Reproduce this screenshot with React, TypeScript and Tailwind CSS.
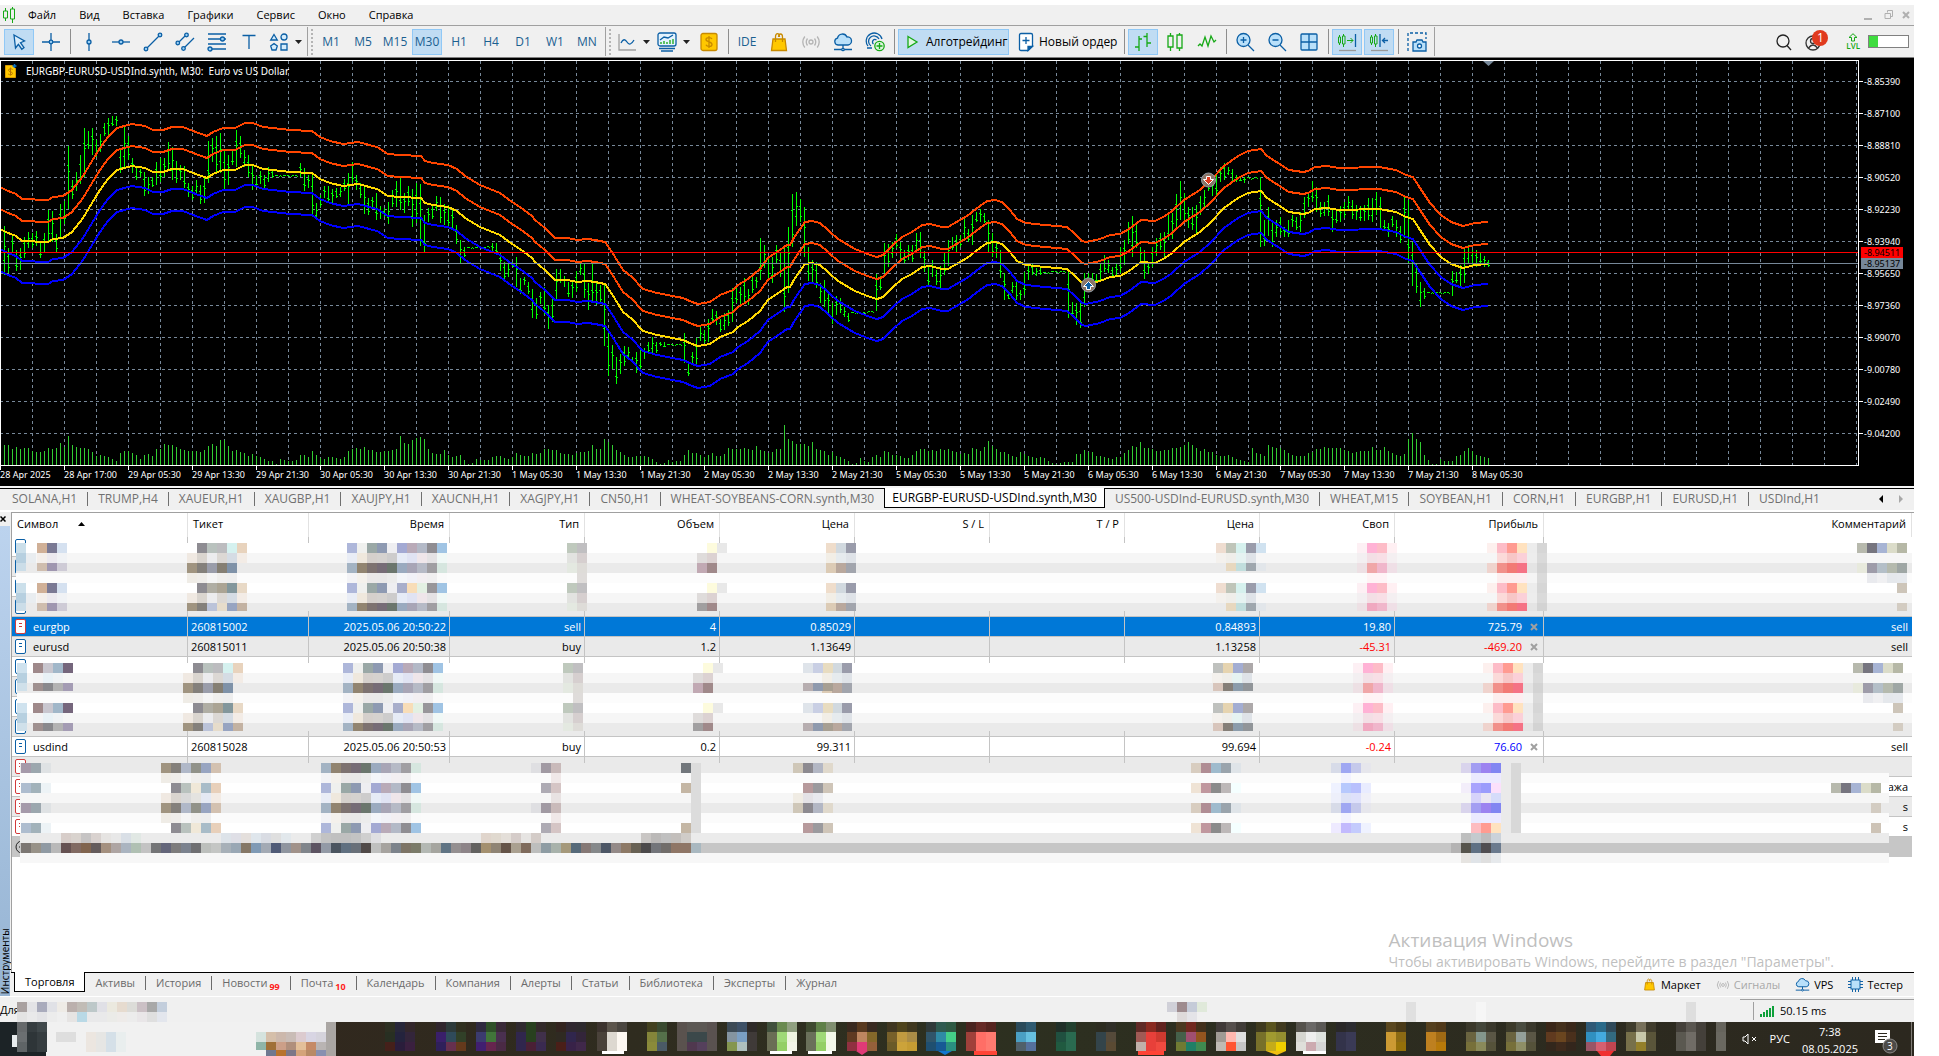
import type { ReactNode } from 'react';

const BLUE = '#0b5fa5';
const GREEN = '#16a916';

// high/low pairs per bar, top of the plot area is y = 60
const BARS = `226 275,248 273,236 253,250 271,248 270,237 258,232 248,233 248,231 246,243 258,233 252,210 241,211 242,234 253,204 237,201 224,146 209,180 199,172 191,155 184,128 177,131 149,128 155,140 157,134 152,123 136,118 135,116 126,116 126,150 173,127 168,136 160,158 173,166 180,169 177,172 196,177 194,177 187,162 185,158 182,158 177,142 170,147 180,161 183,165 180,166 188,183 197,186 200,180 194,185 204,178 203,141 183,138 162,136 173,133 173,150 189,155 185,150 165,130 167,136 158,150 167,155 177,165 190,176 187,171 184,175 188,167 182,170 178,175 176,175 176,175 176,175 176,175 176,175 176,163 177,168 191,175 188,173 215,203 220,195 207,186 198,186 203,189 203,188 198,187 197,179 191,173 205,162 183,175 190,183 198,185 214,198 215,197 207,193 220,206 219,208 217,202 224,190 207,181 207,177 210,193 213,186 206,189 227,183 223,184 246,215 252,208 222,205 219,196 211,197 223,204 225,205 227,209 228,225 244,240 263,247 257,247 248,247 248,247 248,246 247,247 248,246 247,243 252,243 253,253 271,262 280,263 277,262 267,257 287,278 294,277 285,282 294,289 318,298 319,292 304,287 315,305 329,298 322,269 299,269 283,276 287,282 297,280 298,271 292,263 275,263 298,283 310,262 302,283 305,285 303,285 346,333 376,345 369,357 384,354 374,346 366,347 359,357 363,352 373,347 372,348 359,342 353,337 353,342 353,342 346,342 347,344 345,344 345,344 345,344 345,333 363,362 376,352 364,338 364,327 341,330 343,319 342,309 322,311 325,319 332,313 330,310 326,288 322,285 303,287 305,278 302,289 305,275 293,277 288,238 280,245 268,257 278,257 283,245 263,253 277,247 312,227 293,194 247,192 226,199 222,207 257,247 281,260 282,262 288,283 303,280 307,291 313,303 324,296 315,298 313,307 317,313 322,312 313,312 313,313 314,312 313,311 312,311 312,274 311,276 290,243 273,244 267,242 258,234 248,242 260,250 263,245 260,245 262,233 250,232 258,251 272,267 285,260 277,270 285,266 288,253 275,240 266,237 250,235 252,235 247,218 240,229 242,215 245,212 222,209 222,213 223,220 253,233 257,242 258,250 278,273 300,293 299,282 293,280 300,290 300,272 295,265 280,263 275,268 276,268 275,272 273,272 273,271 272,271 272,271 272,271 272,270 318,302 317,303 325,303 328,273 307,273 285,273 288,274 282,263 282,255 272,260 273,267 277,263 277,247 273,240 265,222 244,216 257,223 248,247 263,250 279,262 274,247 267,238 256,233 250,232 258,215 240,213 239,194 227,181 220,193 220,207 228,207 230,205 235,196 215,190 208,177 191,177 196,173 195,167 182,163 180,167 175,169 183,175 182,176 181,177 183,177 178,178 179,177 178,177 247,220 246,207 236,223 247,220 237,217 235,227 237,220 237,215 227,217 230,212 232,197 218,192 207,181 202,187 212,202 217,202 216,195 216,210 232,210 223,206 222,202 218,196 210,200 219,205 220,206 221,205 221,198 220,198 222,192 215,197 228,220 229,223 237,216 227,220 237,226 243,195 238,200 263,242 286,263 293,282 307,288 299,292 293,292 293,292 293,292 293,292 293,292 293,271 296,272 283,265 287,247 283,245 263,250 267,250 267,253 264,256 267,260 267`
  .split(',')
  .map((b) => b.trim().split(' ').map(Number));

const VOLUMES = [
  20, 20, 16, 18, 16, 17, 17, 14, 13, 13, 14, 17, 16, 17, 22, 18, 29, 20, 18, 17, 17, 16, 13, 9, 10, 9, 8, 6, 4, 12, 14, 14, 12, 10, 6, 10, 11, 9,
  16, 16, 21, 20, 20, 18, 16, 15, 14, 14, 14, 13, 15, 19, 21, 19, 25, 25, 19, 14, 15, 13, 12, 9, 11, 9, 8, 6, 4, 4, 1, 6, 5, 4, 4, 5, 10, 10, 8,
  14, 10, 7, 6, 8, 8, 7, 6, 8, 14, 16, 17, 16, 18, 15, 15, 13, 13, 14, 14, 15, 16, 29, 22, 21, 25, 27, 28, 26, 16, 12, 11, 11, 15, 10, 8, 9, 10,
  5, 1, 2, 6, 5, 5, 5, 8, 9, 9, 7, 6, 8, 12, 10, 9, 9, 12, 11, 12, 16, 16, 15, 15, 12, 11, 11, 10, 12, 13, 13, 14, 20, 16, 16, 26, 23, 20, 15,
  13, 10, 8, 8, 9, 9, 9, 8, 6, 3, 1, 2, 5, 3, 4, 4, 10, 15, 12, 12, 10, 8, 10, 12, 9, 9, 11, 17, 16, 16, 16, 17, 16, 15, 19, 15, 14, 12, 13, 16, 16,
  40, 26, 24, 21, 21, 21, 19, 23, 16, 15, 14, 10, 13, 9, 8, 6, 4, 1, 2, 7, 4, 3, 8, 10, 8, 14, 13, 10, 10, 9, 7, 7, 10, 14, 16, 16, 14, 15,
  14, 16, 15, 16, 14, 13, 11, 12, 11, 17, 16, 14, 18, 24, 19, 16, 13, 13, 11, 9, 8, 13, 11, 9, 8, 7, 8, 7, 4, 2, 1, 2, 3, 3, 3, 11, 11, 15, 13,
  13, 9, 9, 8, 7, 6, 8, 8, 12, 15, 19, 18, 23, 17, 17, 16, 14, 14, 15, 15, 17, 17, 18, 20, 23, 20, 17, 14, 16, 13, 13, 10, 9, 9, 10, 8, 6, 5, 4,
  3, 17, 12, 11, 9, 20, 18, 17, 17, 15, 12, 10, 9, 9, 9, 12, 13, 16, 16, 18, 17, 17, 17, 17, 15, 14, 12, 13, 14, 14, 14, 18, 15, 15, 18, 14, 12,
  10, 9, 11, 26, 32, 26, 23, 10, 5, 1, 1, 6, 4, 4, 4, 9, 10, 14, 17, 14, 10, 9, 8, 7, 2,
];

const AVERAGE =
  '0,229 8,233 16,236 22,241 48,242 53,239 63,238 72,232 83,218 92,203 100,190 108,179 117,170 132,166 145,168 153,172 163,172 172,169 183,169 193,173 207,178 213,174 223,170 235,170 245,165 253,165 263,169 290,172 312,173 320,179 330,183 343,186 358,184 377,189 388,196 400,197 421,198 425,203 433,205 448,207 457,211 465,218 480,227 500,235 512,244 520,249 532,258 535,262 545,270 555,280 568,280 577,282 588,281 595,282 605,284 610,291 615,299 623,312 632,319 643,331 657,335 683,340 692,344 698,346 710,344 720,337 733,332 738,327 748,321 760,311 768,300 787,287 790,287 795,278 805,264 812,263 820,265 828,272 838,281 855,291 870,297 877,299 883,297 893,287 902,279 912,274 922,267 930,266 942,269 948,269 953,266 967,258 980,248 987,243 995,242 1002,244 1010,252 1017,261 1026,265 1045,267 1067,269 1074,275 1082,283 1086,284 1100,281 1110,277 1120,276 1129,271 1141,262 1155,263 1165,258 1172,253 1184,242 1200,232 1210,223 1224,208 1238,198 1248,193 1261,191 1267,198 1275,203 1289,212 1303,214 1308,213 1315,209 1327,208 1339,210 1379,209 1396,212 1406,217 1413,219 1420,230 1430,245 1441,257 1451,264 1463,268 1475,265 1488,264';

const ENVELOPES = [
  { offset: -42, color: '#ff4500' },
  { offset: -20, color: '#ff4500' },
  { offset: 20, color: '#0000ff' },
  { offset: 42, color: '#0000ff' },
  { offset: 0, color: '#ffd700' },
];

const PRICES = ['8.85390', '8.87100', '8.88810', '8.90520', '8.92230', '8.93940', '8.95650', '8.97360', '8.99070', '9.00780', '9.02490', '9.04200'];

const TIMES = [
  '28 Apr 2025', '28 Apr 17:00', '29 Apr 05:30', '29 Apr 13:30', '29 Apr 21:30', '30 Apr 05:30', '30 Apr 13:30', '30 Apr 21:30',
  '1 May 05:30', '1 May 13:30', '1 May 21:30', '2 May 05:30', '2 May 13:30', '2 May 21:30', '5 May 05:30', '5 May 13:30',
  '5 May 21:30', '6 May 05:30', '6 May 13:30', '6 May 21:30', '7 May 05:30', '7 May 13:30', '7 May 21:30', '8 May 05:30',
];

function PriceChart() {
  const barPath = BARS.map(([hi, lo], i) => {
    const x = 4 + i * 4;
    const span = lo - hi;
    const open = Math.round(hi + span * (i % 3 === 0 ? 0.7 : 0.3));
    const close = Math.round(hi + span * (i % 2 === 0 ? 0.4 : 0.75));
    return `M${x} ${hi}h1v${Math.max(span, 1)}h-1zM${x - 1} ${open}h1v1h-1zM${x + 1} ${close}h1v1h-1z`;
  }).join('');
  const volumePath = VOLUMES.slice(0, BARS.length).map((v, i) => `M${4 + i * 4} ${465 - v}h1v${v}h-1z`).join('');

  return (
    <svg width="1914" height="428" viewBox="0 58 1914 428" className="block bg-black font-['Noto_Sans',sans-serif] text-[9px]">
      <g stroke="#778899" strokeDasharray="3 3" shapeRendering="crispEdges">
        {PRICES.map((p, i) => (
          <line key={p} x1="0" x2="1858" y1={81.5 + i * 32} y2={81.5 + i * 32} />
        ))}
        {Array.from({ length: 58 }, (_, i) => (
          <line key={i} x1={32.5 + i * 32} x2={32.5 + i * 32} y1="61" y2="465" />
        ))}
      </g>
      <path d={volumePath} fill="#32cd32" shapeRendering="crispEdges" />
      <path d={barPath} fill="#00ff00" shapeRendering="crispEdges" />
      {ENVELOPES.map((e) => (
        <polyline
          key={e.offset}
          points={AVERAGE}
          transform={`translate(0 ${e.offset})`}
          fill="none"
          stroke={e.color}
          strokeWidth="2"
          strokeLinejoin="round"
          shapeRendering="crispEdges"
        />
      ))}
      <g shapeRendering="crispEdges">
        <path d="M0 263h1858v1H0z" fill="#778899" />
        <path d="M0 252h1858v1H0z" fill="#ff0000" />
        <path d="M0 60.500H1858.500V465.500H0.500V60" fill="none" stroke="#fff" />
        {PRICES.map((p, i) => (
          <path key={p} d={`M1859 ${81 + i * 32}h4v1h-4z`} fill="#fff" />
        ))}
        {TIMES.map((t, i) => (
          <path key={t} d={`M${i * 64} 466h1v4h-1z`} fill="#fff" />
        ))}
        <path d="M1861 247h42v11h-42z" fill="#ff0000" />
        <path d="M1861 258h42v11h-42z" fill="#778899" />
      </g>
      <path d="M1483 61h11l-5.500 5z" fill="#778899" />
      <g fill="#fff">
        {PRICES.map((p, i) => (
          <text key={p} x="1864" y={85 + i * 32}>{`-${p}`}</text>
        ))}
        {TIMES.map((t, i) => (
          <text key={t} x={i * 64} y="478">{t}</text>
        ))}
        <text x="26" y="75" className="text-[10px] whitespace-pre">{'EURGBP-EURUSD-USDInd.synth, M30:  Euro vs US Dollar'}</text>
      </g>
      <text x="1864" y="256">-8.94511</text>
      <text x="1864" y="267">-8.95137</text>
      <g>
        <path d="M5.500 65.500h7l3 3v9h-10z" fill="#ffc800" stroke="#d99a00" />
        <path d="M12.500 69.500c-1-1-4-1-4 .7 0 2 4 1.200 4 3.200 0 1.800-3 1.800-4.300.6M10.500 67.500v8" fill="none" stroke="#b87800" />
        <path d="M14.500 64v4M12.500 66h4" stroke="#0b73c5" strokeWidth="1.500" />
      </g>
      <g stroke="#8f9aa5" fill="#8a7568">
        <circle cx="1208.500" cy="180" r="7" />
        <circle cx="1088.500" cy="285" r="7" />
      </g>
      <path d="M1206.500 176.500h4v3h3l-5 5-5-5h3z" fill="#e0391e" stroke="#fff" />
      <path d="M1086.500 289.500h4v-3h3l-5-5-5 5h3z" fill="#0b5fa5" stroke="#fff" />
    </svg>
  );
}

function Icon({ children, size = 20, color = BLUE }: { children: ReactNode; size?: number; color?: string }) {
  return (
    <svg width={size} height={size} viewBox="0 0 20 20" fill="none" stroke={color} strokeWidth="1.3" className="shrink-0">
      {children}
    </svg>
  );
}

function Tool({ label, active, children }: { label: string; active?: boolean; children: ReactNode }) {
  return (
    <button
      aria-label={label}
      className={`flex h-[26px] w-[30px] shrink-0 items-center justify-center border text-[12px] text-[#1b6090] ${
        active ? 'border-[#90c8f6] bg-[#c0dcf3]' : 'border-transparent'
      }`}
    >
      {children}
    </button>
  );
}

function MenuTool({ label, children }: { label: string; children: ReactNode }) {
  return (
    <button aria-label={label} className="flex h-[26px] w-[38px] shrink-0 items-center gap-[6px] pl-[3px]">
      {children}
      <svg width="7" height="4" viewBox="0 0 7 4" fill="#222">
        <path d="M0 0h7L3.500 4z" />
      </svg>
    </button>
  );
}

function Divider() {
  return (
    <div className="flex w-1 shrink-0 justify-center">
      <div className="h-[25px] w-px bg-[#8d8d8d]" />
    </div>
  );
}

function Grip() {
  return (
    <div className="flex w-[8px] shrink-0 items-center gap-[3px] pl-px">
      <div className="h-[29px] w-px bg-[#a0a0a0]" />
      <div className="h-[26px] border-l-2 border-dotted border-[#b4b4b4]" />
    </div>
  );
}

function BagIcon({ size = 20 }: { size?: number }) {
  return (
    <Icon size={size} color="#c88a00">
      <path d="M4 7h12l1.500 11.500h-15z" fill="#ffc800" />
      <path d="M6.500 10V5c0-4.500 4-4.500 4 0M9.500 5c0-4 4-4 4 0v5" />
    </Icon>
  );
}

function SignalIcon({ size = 20 }: { size?: number }) {
  return (
    <Icon size={size} color="#b4b4b4">
      <circle cx="10" cy="10" r="2" />
      <path d="M6.500 6.500q-2.500 3.500 0 7M13.500 6.500q2.500 3.500 0 7M3.800 4.500q-4 5.500 0 11M16.200 4.500q4 5.500 0 11" />
    </Icon>
  );
}

function CloudIcon({ size = 20 }: { size?: number }) {
  return (
    <Icon size={size}>
      <path d="M5 13a3.500 3.500 0 0 1-.5-6.900A5 5 0 0 1 14 5a4 4 0 0 1 1 8z" fill="#b9e0fa" />
      <path d="M10 13v4M1 17.500h18" />
      <circle cx="10" cy="17.500" r="1.200" fill="#fff" />
    </Icon>
  );
}

const TIMEFRAMES = ['M1', 'M5', 'M15', 'M30', 'H1', 'H4', 'D1', 'W1', 'MN'];

function Toolbar() {
  return (
    <div className="flex h-[32px] items-center gap-[2px] border-b border-[#808080] bg-[#f0f0f0] pl-1">
      <Tool label="Курсор" active>
        <Icon>
          <path d="M5 3l10.500 6-4 1.700 3.500 4.800-2.200 1.700-3.400-4.900L6.500 16z" fill="#d9ecfa" />
        </Icon>
      </Tool>
      <Tool label="Перекрестие">
        <Icon>
          <path d="M10 1v7M10 12v7M1 10h7M12 10h7" />
          <circle cx="10" cy="10" r="1.800" fill="#9bd0f5" />
        </Icon>
      </Tool>
      <Divider />
      <Tool label="Вертикальная линия">
        <Icon>
          <path d="M10 1v18" />
          <circle cx="10" cy="10" r="2" fill="#9bd0f5" />
        </Icon>
      </Tool>
      <Tool label="Горизонтальная линия">
        <Icon>
          <path d="M1 10h18" />
          <circle cx="10" cy="10" r="2" fill="#9bd0f5" />
        </Icon>
      </Tool>
      <Tool label="Трендовая линия">
        <Icon>
          <path d="M3 17L17 3" />
          <circle cx="3" cy="17" r="1.800" fill="#9bd0f5" />
          <circle cx="17" cy="3" r="1.800" fill="#9bd0f5" />
        </Icon>
      </Tool>
      <Tool label="Канал">
        <Icon>
          <path d="M2.500 11.500l9-9M8 17l11-11" />
          <circle cx="2.800" cy="11" r="1.800" fill="#9bd0f5" />
          <circle cx="11.500" cy="3" r="1.800" fill="#9bd0f5" />
          <circle cx="8.500" cy="16.500" r="1.800" fill="#9bd0f5" />
        </Icon>
      </Tool>
      <Tool label="Уровни Фибоначчи">
        <Icon>
          <path d="M1 2h18M1 7h18M1 12h18M1 17h18" />
          <circle cx="15.500" cy="7" r="2" fill="#9bd0f5" />
          <circle cx="3" cy="17" r="2" fill="#9bd0f5" />
        </Icon>
      </Tool>
      <Tool label="Текст">
        <Icon>
          <path d="M3.500 3.500h13M10 3.500V17" />
        </Icon>
      </Tool>
      <MenuTool label="Фигуры">
        <Icon>
          <path d="M5 2.500l3.300 5.500H1.700z" fill="#d5ecfb" />
          <circle cx="15" cy="5" r="3" fill="#d5ecfb" />
          <path d="M5 11.500l3.300 2.500-1.300 4H3l-1.300-4zM12 12h6v6h-6z" fill="#d5ecfb" />
        </Icon>
      </MenuTool>
      <Grip />
      {TIMEFRAMES.map((t) => (
        <Tool key={t} label={t} active={t === 'M30'}>
          {t}
        </Tool>
      ))}
      <Grip />
      <MenuTool label="Линия">
        <Icon>
          <path d="M2 2v16h17" stroke="#a0a0a0" />
          <path d="M4 11q3-6 6-1t7-2" />
        </Icon>
      </MenuTool>
      <MenuTool label="Шаблоны">
        <Icon>
          <rect x="1" y="1" width="18" height="13" rx="2" fill="#e4f3fd" />
          <path d="M3 8l4-3 4 1 5-3M2 16.500h16M4 19h12" />
          <path d="M4 12v-2M7 12V9M10 12v-2M13 12V8M16 12V7" stroke={GREEN} />
        </Icon>
      </MenuTool>
      <Tool label="Символы">
        <Icon color="#c88a00">
          <rect x="2" y="1.500" width="16" height="17" rx="2" fill="#ffc800" />
          <path d="M13 7c-1-2-6-2-6 .6 0 2.800 6 1.800 6 4.800 0 2.600-5 2.600-6 .4M10 4v12" />
        </Icon>
      </Tool>
      <Divider />
      <Tool label="IDE">IDE</Tool>
      <Tool label="Маркет"><BagIcon /></Tool>
      <Tool label="Сигналы"><SignalIcon /></Tool>
      <Tool label="VPS"><CloudIcon /></Tool>
      <Tool label="Добавить сервис">
        <Icon>
          <path d="M3 14a8 8 0 1 1 14-7M6 14a5.500 5.500 0 1 1 8-7M8.500 12a2.500 2.500 0 1 1 3-4M2 16h5" />
          <circle cx="14.500" cy="14" r="4.700" fill="#dff5df" stroke={GREEN} />
          <path d="M14.500 11v6M11.500 14h6" stroke={GREEN} />
        </Icon>
      </Tool>
      <Divider />
      <button className="flex h-[26px] w-[111px] shrink-0 items-center gap-1 border border-[#90c8f6] bg-[#c0dcf3] pl-[3px] text-[12px]">
        <Icon color={GREEN}>
          <path d="M6 4.500l9 5.500-9 5.500z" fill="#e2f7e2" />
        </Icon>
        Алготрейдинг
      </button>
      <button className="flex h-[26px] w-[109px] shrink-0 items-center gap-[3px] pl-[5px] text-[12px]">
        <Icon>
          <path d="M5 1.500h10q1.500 0 1.500 1.500v11l-4.500 4.500H5Q3.500 18.500 3.500 17V3q0-1.500 1.500-1.500z" fill="#fff" />
          <path d="M12 18.500v-4h4.500z" fill={BLUE} />
          <path d="M10 5v7M6.500 8.500h7" />
        </Icon>
        Новый ордер
      </button>
      <Divider />
      <Tool label="Бары" active>
        <Icon color={GREEN}>
          <path d="M6 4v15M2 15h4M6 7h3M14 1v14M10.500 4.500H14M14 11h4" />
        </Icon>
      </Tool>
      <Tool label="Свечи">
        <Icon color={GREEN}>
          <path d="M5.500 1v3M5.500 15v4M3 4h5v11H3zM14.500 1v2M14.500 16v3M12 3h5v13h-5z" />
        </Icon>
      </Tool>
      <Tool label="График линией">
        <Icon color={GREEN}>
          <path d="M1 14l2-2 2 2 3-9 3 9 3-10 3 6 2-2" />
        </Icon>
      </Tool>
      <Divider />
      <Tool label="Увеличить">
        <Icon>
          <circle cx="8.500" cy="8" r="6.500" fill="#b9e0fa" />
          <path d="M13 13l6 6M8.500 5v6M5.500 8h6" />
        </Icon>
      </Tool>
      <Tool label="Уменьшить">
        <Icon>
          <circle cx="8.500" cy="8" r="6.500" fill="#b9e0fa" />
          <path d="M13 13l6 6M5.500 8h6" />
        </Icon>
      </Tool>
      <Tool label="Плитка">
        <Icon>
          <rect x="2" y="2" width="16" height="16" rx="1" fill="#b9e0fa" />
          <path d="M10 2v16M2 10h16" />
        </Icon>
      </Tool>
      <Divider />
      <Tool label="Автопрокрутка" active>
        <Icon color={GREEN}>
          <path d="M2.500 3v2M2.500 11v2M1.500 5h2v6h-2zM6.500 2v2M6.500 12v3M5.500 4h2.500v8H5.500zM10 8.500h6M13.500 6l2.500 2.500-2.500 2.500" strokeWidth="1" />
          <path d="M18.500 2v13" stroke={BLUE} />
          <path d="M2 18.500h17" stroke="#999" />
        </Icon>
      </Tool>
      <Tool label="Сдвиг" active>
        <Icon color={GREEN}>
          <path d="M2.500 3v2M2.500 11v2M1.500 5h2v6h-2zM6.500 2v2M6.500 12v3M5.500 4h2.500v8H5.500z" strokeWidth="1" />
          <path d="M11 2v13M19 8.500h-5.500M16 6l-2.500 2.500L16 11" stroke={BLUE} />
          <path d="M2 18.500h17" stroke="#999" />
        </Icon>
      </Tool>
      <Divider />
      <Tool label="Снимок">
        <Icon>
          <path d="M1 19V1h18v6" strokeDasharray="3 2" />
          <path d="M6 10h3l1-2h5l1 2h3v9H6z" fill="#b9e0fa" />
          <circle cx="12.500" cy="14" r="2" fill="#fff" />
        </Icon>
      </Tool>
      <div className="h-[29px] w-px bg-[#a0a0a0]" />
      <div className="ml-auto flex items-center pr-[5px]">
        <button aria-label="Поиск" className="mr-[10px] flex">
          <Icon color="#222">
            <circle cx="9" cy="9" r="6" />
            <path d="M13 13.500l4 4.500" />
          </Icon>
        </button>
        <button aria-label="Аккаунт" className="relative mr-[22px] flex">
          <Icon color="#333">
            <circle cx="9" cy="11" r="7" />
            <circle cx="9" cy="9" r="2.500" />
            <path d="M4.500 16q4.500-6 9 0" />
          </Icon>
          <span className="absolute -top-[2px] left-[8px] flex h-4 w-4 items-center justify-center rounded-full bg-[#e03a1e] text-[12px] text-white">1</span>
        </button>
        <div className="mr-2 flex flex-col items-center text-[8px] leading-[8px] font-semibold text-[#16a916]">
          <svg width="10" height="9" viewBox="0 0 10 9" fill="none" stroke={GREEN}>
            <path d="M5 .7L9 4.500H6.500V8h-3V4.500H1z" />
          </svg>
          LVL
        </div>
        <div className="h-[13px] w-[41px] border border-[#808080] bg-white">
          <div className="h-full w-[9px] bg-[#3fdc3f]" />
        </div>
      </div>
    </div>
  );
}

const MENU = ['Файл', 'Вид', 'Вставка', 'Графики', 'Сервис', 'Окно', 'Справка'];

function MenuBar() {
  return (
    <div className="flex h-[21px] items-center border-b border-[#a0a0a0] bg-[#f0f0f0] pl-[2px]">
      <svg width="14" height="16" viewBox="0 0 14 16" fill="none" stroke={GREEN} className="mr-3">
        <path d="M3.500 1v3M3.500 11v3M1.500 4h4v7h-4zM10.500 0v2M10.500 12v4M8.500 2h4v10h-4z" />
      </svg>
      <nav className="flex gap-[23px] text-[11px]">
        {MENU.map((m) => (
          <button key={m}>{m}</button>
        ))}
      </nav>
      <div className="ml-auto flex items-center gap-2 pr-1 text-[#a8a8a8]">
        <button aria-label="Свернуть" className="mt-2 mr-1 h-[2px] w-2 bg-[#b0b0b0]" />
        <button aria-label="Восстановить">
          <svg width="10" height="10" viewBox="0 0 10 10" fill="none" stroke="#b0b0b0">
            <path d="M3.500 2.500v-2h5v6h-2M1 3.500h5.500v5H1z" />
          </svg>
        </button>
        <button aria-label="Закрыть">
          <svg width="8" height="8" viewBox="0 0 8 8" stroke="#b0b0b0" strokeWidth="2">
            <path d="M1 1l6 6M7 1L1 7" />
          </svg>
        </button>
      </div>
    </div>
  );
}

const CHART_TABS = [
  'SOLANA,H1', 'TRUMP,H4', 'XAUEUR,H1', 'XAUGBP,H1', 'XAUJPY,H1', 'XAUCNH,H1', 'XAGJPY,H1', 'CN50,H1', 'WHEAT-SOYBEANS-CORN.synth,M30',
  'EURGBP-EURUSD-USDInd.synth,M30', 'US500-USDInd-EURUSD.synth,M30', 'WHEAT,M15', 'SOYBEAN,H1', 'CORN,H1', 'EURGBP,H1', 'EURUSD,H1', 'USDInd,H1',
];
const ACTIVE_CHART = 9;

function ChartTabs() {
  return (
    <nav className="flex h-[22px] items-start border-t border-black bg-[#f0f0f0] pl-[2px] text-[12px] text-[#707070]">
      {CHART_TABS.map((tab, i) =>
        i === ACTIVE_CHART ? (
          <button key={tab} className="-mt-px h-[20px] border border-t-0 border-black bg-white px-[7px] leading-[19px] whitespace-nowrap text-black">
            {tab}
          </button>
        ) : (
          <button key={tab} className="flex h-[19px] items-center whitespace-nowrap">
            <span className="px-[10px] leading-[18px]">{tab}</span>
            {i !== ACTIVE_CHART - 1 && i !== CHART_TABS.length - 1 && <span className="h-[14px] w-px bg-[#707070]" />}
          </button>
        ),
      )}
      <div className="ml-auto flex h-[19px] items-center gap-[16px] pr-[11px]">
        <button aria-label="Назад">
          <svg width="4" height="8" viewBox="0 0 4 8"><path d="M4 0v8L0 4z" /></svg>
        </button>
        <button aria-label="Вперёд">
          <svg width="4" height="8" viewBox="0 0 4 8" fill="#a8a8a8"><path d="M0 0v8l4-4z" /></svg>
        </button>
      </div>
    </nav>
  );
}

interface Trade {
  symbol: string;
  ticket: string;
  time: string;
  type: string;
  volume: string;
  open: string;
  price: string;
  swap: string;
  profit: string;
  comment: string;
}

const TRADES: Record<number, Trade> = {
  4: { symbol: 'eurgbp', ticket: '260815002', time: '2025.05.06 20:50:22', type: 'sell', volume: '4', open: '0.85029', price: '0.84893', swap: '19.80', profit: '725.79', comment: 'sell' },
  5: { symbol: 'eurusd', ticket: '260815011', time: '2025.05.06 20:50:38', type: 'buy', volume: '1.2', open: '1.13649', price: '1.13258', swap: '-45.31', profit: '-469.20', comment: 'sell' },
  10: { symbol: 'usdind', ticket: '260815028', time: '2025.05.06 20:50:53', type: 'buy', volume: '0.2', open: '99.311', price: '99.694', swap: '-0.24', profit: '76.60', comment: 'sell' },
};

const HIDDEN_COMMENTS: Record<number, string> = { 12: 'ажа', 13: 's', 14: 's' };

function DocIcon({ color }: { color: string }) {
  return (
    <svg width="11" height="15" viewBox="0 0 11 15" fill="#fff" stroke={color} className="shrink-0">
      <rect x=".5" y=".5" width="10" height="14" rx="1.500" />
      <path d="M4 4.500h3M4 7.500h3" />
    </svg>
  );
}

function TradeRow({ index }: { index: number }) {
  const trade = TRADES[index];
  const selected = index === 4;
  const bg = selected ? 'bg-[#0078d7] text-white' : index % 2 === 1 ? 'bg-[#eaeaea]' : 'bg-white';
  const cell = 'border-r border-b border-[#c4c4c4] px-[3px] py-0';
  const tone = (v?: string) => (selected || !v ? '' : v.startsWith('-') ? 'text-[#ff0000]' : 'text-[#0000ff]');
  const docColor = selected || index > 10 ? '#d23a3a' : BLUE;

  return (
    <tr className={`h-5 text-right ${bg}`}>
      <td className={`${cell} text-left`}>
        <div className="flex h-[19px] items-center gap-[7px]">
          <DocIcon color={docColor} />
          {trade?.symbol}
        </div>
      </td>
      <td className={`${cell} text-left`}>{trade?.ticket}</td>
      <td className={cell}>{trade?.time}</td>
      <td className={cell}>{trade?.type}</td>
      <td className={cell}>{trade?.volume}</td>
      <td className={cell}>{trade?.open}</td>
      <td className={cell} />
      <td className={cell} />
      <td className={cell}>{trade?.price}</td>
      <td className={`${cell} ${tone(trade?.swap)}`}>{trade?.swap}</td>
      <td className={`${cell} ${tone(trade?.profit)}`}>
        {trade && (
          <div className="flex items-center justify-end gap-2 pr-[2px]">
            {trade.profit}
            <button aria-label="Закрыть позицию">
              <svg width="8" height="8" viewBox="0 0 8 8" stroke="#a0a0a0" strokeWidth="2">
                <path d="M1 1l6 6M7 1L1 7" />
              </svg>
            </button>
          </div>
        )}
      </td>
      <td className="border-b border-[#c4c4c4] px-1 py-0">{trade?.comment ?? HIDDEN_COMMENTS[index]}</td>
    </tr>
  );
}

// [x, y, height, colours of successive 10px blocks]
type Run = [number, number, number, string];

function Mosaic({ runs }: { runs: Run[] }) {
  return (
    <g shapeRendering="crispEdges">
      {runs.flatMap(([x, y, h, colors]) =>
        colors.split(' ').map((c, i) => (c === '-' ? null : <rect key={`${x}-${y}-${i}`} x={x + i * 10} y={y} width="10" height={h} fill={`#${c}`} />)),
      )}
    </g>
  );
}

const TIME_A = 'aeb7da eff0ee 9aa8a6 8e9ab2 eeeef1 a3a9d3 b9aab8 b3b9c7 8f8d92 a0c4e4';
const TIME_B = 'e9edf6 efe8dd d5d0cc d5d2cf cdcccc e6ebf6 e0e3f3 efe6ea e4e2e4 f0f8f6';
const TIME_C = 'a3b3c3 918470 7d7270 766c76 6b766d 9aaabf a8a5b6 b6bac6 a09ea2 d6e6df';
const TIME_D = 'f3f3f6 f4f1ec eae8e8 e9e8e8 ececec f3f5f9 f1f1f7 f3eff2 f0eff0 fafafa';
const TIME_E = 'aeb7da eff0ee 9aa8a6 8e9ab2 eeeef1 a8aecb f8ddb8 e3f0e3 98969a a0c4e4';

// columns shared by the two upper blurred blocks
function upperBlock(y: number, dx: number): Run[] {
  const a = [y, y + 40];
  const b = [y + 10, y + 50];
  const c = [y + 20, y + 60];
  const runs: Run[] = [];
  a.forEach((t, i) => {
    runs.push(
      [197 - dx, t, 10, i ? '8e8c92 b0aea4 aba494 83979c e8d9c6' : '8e8c92 b9c2be bcbcbf d5f1ef e8d3bd'],
      [347 - dx, t, 10, i ? TIME_E : TIME_A],
      [567 - dx, t, 10, 'bfc9bd c0bfc1'],
      [707 - dx, t, 10, 'fdfbdd e8e8e8'],
      [826 - dx, t, 10, 'efddcb d1d9df 9a9cab'],
      [1487 - dx, t, 10, 'fdf0ee fdbcc7 ff9b91 ffe2bf ececec d6d6d6'],
      [1357 - dx, t, 10, 'fdf0f4 ffb2d5 fdbcc7 fff0f3'],
    );
  });
  b.forEach((t) => {
    runs.push(
      [187 - dx, t, 10, 'f0e9e2 dad5cf ececee dcd8d4 d5dce4 f3ece6'],
      [347 - dx, t, 10, TIME_B],
      [567 - dx, t, 10, 'e2e3e0 d6cfcf'],
      [697 - dx, t, 10, 'dfdcdb dcd2d2'],
      [826 - dx, t, 10, 'f2eee6 e6ebee dfe3e8'],
      [1216 - dx, t, 10, 'f4f1ed efeeea e6f3f2 dfe3e8'],
      [1357 - dx, t, 10, 'f3eff1 f3dfe5 f8dfe6 f4eff1'],
      [1497 - dx, t, 10, 'fbdad9 f7c7c7 fbd0d8 ededed dadada'],
    );
  });
  c.forEach((t, i) => {
    const h = i ? 8 : 10;
    runs.push(
      [187 - dx, t, h, i ? 'a09480 84807b bbc3d9 e6dccb 97a4c1 c3b2a2' : 'a09480 84807b 9a9daa 857f73 7f92a8'],
      [347 - dx, t, h, TIME_C],
      [567 - dx, t, h, 'e4e9e1 dedcd8'],
      [697 - dx, t, h, i ? 'a19fa0 a0898a' : 'c1a9b3 a0898a'],
      [826 - dx, t, h, 'dccbb5 b9a89d a2a5ad'],
      [1357 - dx, t, h, i ? 'ede0e4 f0a8c0 f0b6cb efdfe6' : 'ede0e4 f0a6a8 f0b6cb efdfe6'],
      [1487 - dx, t, h, 'efd3cd f1908a f27a75 f57285 e4e4e4 d3d3d3'],
    );
  });
  runs.push(
    [187 - dx, y + 30, 10, 'efece6 efedea f5f5f5 f0efed eeeeee'],
    [347 - dx, y + 30, 10, TIME_D],
    [577 - dx, y + 30, 10, 'dfdcda'],
    [1367 - dx, y + 30, 10, 'fff3f5 fff3f6'],
    [1497 - dx, y + 30, 10, 'fdeeee fdeeee fdeef0 f4f4f4 dadada'],
    [1857 - dx, y, 10, 'b7b9ad 76757f a7b4d4 dbdcc9 b6b8a6'],
    [1857 - dx, y + 20, 10, 'e8eadd 9e9ca9 b4bfc8 b5baae 9fa7a5'],
    [1867 - dx, y + 30, 10, 'e9eaee f0f0f2 e5e8ec e6e9ed'],
    [1897 - dx, y + 40, 10, 'cdc5b9'],
    [1897 - dx, y + 60, 8, 'd3ccc2'],
  );
  return runs;
}

const FIRST: Run[] = [
  ...[543, 583].flatMap((t): Run[] => [[16, t, 10, 'cbdfea'], [37, t, 10, 'd0b097 7a7994 d5e1f0'], [1216, t, 10, 'efddd0 bfc5b9 d6f1ee 9a9cab d0e2f0']]),
  ...[553, 593].flatMap((t): Run[] => [[16, t, 10, 'b7d0e0 e9edf0'], [37, t, 10, 'f4efeb ebe9ef f0f2f5']]),
  ...[563, 603].flatMap((t): Run[] => [[16, t, 8, 'cbdde8'], [37, t, 8, 'cfbdae 9f96b0 cecbd6'], [1226, t, 8, 'e7d8bf c1dedd 9fa7ae e2e6ea']]),
];

const SECOND: Run[] = [
  ...[663, 703].flatMap((t): Run[] => [[17, t, 10, 'cfe2ee'], [33, t, 10, '9f898a c9c7cf a1b7c9 75667c'], [803, t, 10, 'dfe4ea c9cfe4 e8dcc0'], [1213, t, 10, 'bfc1be e6d4b0 a3add2 ada9aa']]),
  ...[673, 713].flatMap((t): Run[] => [[17, t, 10, 'b7d0e0'], [33, t, 10, 'f4f4f4 e9f2f6 f0f3f5 f6f6f6']]),
  ...[683, 723].flatMap((t): Run[] => [[17, t, 8, 'cfe0ea'], [33, t, 8, '9f908f 89898d b3b3b3 a49cb4'], [803, t, 8, 'b7aeb0 8f9aae a79f92'], [1213, t, 8, 'd8c5bb 857f78 8b9cab 919599']]),
];

const THIRD: Run[] = [
  ...[763, 803].flatMap((t): Run[] => [
    [21, t, 10, 'a59aaa 9ca7ae dfe2e4'],
    [161, t, 10, 'a09480 84807b b0b8c8 919289 98a5c1 d3c1b0'],
    [321, t, 10, TIME_C],
    [531, t, 10, 'dfdfe2 a19aa3 c9baba'],
    [793, t, 10, 'cfc7b8 8d8a90 b3b7c4 e0d9cc'],
    [1191, t, 10, 'd8cdc0 b08d94 9fbbcd 9aa4ac dfe4e8'],
    [1331, t, 10, 'd7dbe8 9fa7f2 c5c9eb e6e6ec'],
    [1461, t, 10, 'd9d4ec a29df2 9c83f0 8286f2'],
  ]),
  ...[773, 813].flatMap((t): Run[] => [[161, t, 10, 'efece6 efedea f5f5f5 f0efed eeeeee'], [321, t, 10, TIME_D], [551, t, 10, 'f0e8e8'], [1341, t, 10, 'f3f3ff'], [1471, t, 10, 'ebeaff ecebff edeaff']]),
  ...[783, 823].flatMap((t): Run[] => [
    [21, t, 10, 'aebdcf a2b2ba edf3f6'],
    [171, t, 10, '8e8c92 b9c2be f0e8d8 a8bcc8 e8d0ba'],
    [321, t, 10, TIME_A],
    [541, t, 10, 'aeabb4 d5c5c5'],
    [681, t, 10, 'c4b6a4'],
    [803, t, 10, 'b79a9c 9b9a9e cfc5b8'],
    [1191, t, 10, 'efe3d5 c0979e 8b8b8b bdb8b8 f5ffff'],
  ]),
  [793, 793, 10, 'f0ece4 e4e2e6 e8e9ee'],
  [161, 793, 10, 'f0e9e2 dad5cf d9d9d9 e4e3e0 e4e9f3 f3ebe4'],
  [321, 793, 10, TIME_B],
  [551, 793, 10, 'e8e2e2'],
  [681, 763, 10, '72777c'],
  ...[763, 773, 783, 793, 803, 813, 823].flatMap((t): Run[] => [[691, t, 10, 'dcdcdc'], [1501, t, 10, 'eaeaea d8d8d8']]),
  [1331, 783, 10, 'eff2ff b7c9fd b8c0fd e9ecff'],
  [1331, 793, 10, 'edeffa dde2f6 dfe1fb f0f0f8'],
  [1331, 823, 10, 'eeeaff c2bafd c4cbfd eff2ff'],
  [1461, 783, 10, 'f3eefa a8a3fd 9b9cfc fbe0fb'],
  [1471, 793, 10, 'd6d3fa ebe7f2 d5dcfa'],
  [1471, 823, 10, 'fdbcc0 ff9b91 ffe2bf'],
  [1831, 783, 10, 'b7b9ad 76757f a7b4d4 dbdcc9 b6b8a6'],
  [1871, 803, 10, 'd3ccc2'],
  [1871, 823, 10, 'cdc3b6'],
  [61, 833, 10, 'd7cdc9 d9d3ce c6c4c4 d9d2cf e6e4e2 e8e8e8 d9dfe6 e1e8e4'],
  [221, 833, 10, 'dde3e9 dfdfe6 e4dfdc dfe6ec d9dce3 dfdfdf e2e8ec'],
  [311, 833, 10, 'd0d0d0 c3c3c3 c0c0c0 c0c0c0 c3c3c3 cfcfcf dfdfe2'],
  [481, 833, 10, 'e0d5cc e0d9cf e4dfd9 d5ccc9 e6e4e2 d4ccc8'],
  [641, 833, 10, 'c9c6c4 bbb9b8 c0c0c0 c3bfbc d0ccc8'],
  [
    21, 843, 10,
    '7b7672 989288 909aa3 b9b9b9 665252 816a62 81654f 655c5c a4907f aea5a3 aab4c0 b0c0b3 c3c3c3 747577 64667a 7d7c7c 7b828e 6f6f72 bcbfbc c4c6c4 a7b0b8 99a7b4 857766 7f9ab5 a3aab4 505b77 8f959f a1928a 80858b 5d5462 939aa6 4b5560 607080 697079 504a48 bfc0bf a6a39f 7c838b 7d7466 7b7b69 b3b8b3 a5a59f 607484 948f90 8d8488 636260 a4906f 8f8474 655448 aaa090 7f6b5c bdbebd 8e9ca3 a8b2ab a5997b 566a79 857875 85888a 4d5766 948a88 8d7966 686154 4c4a4b 73757a 716d6a 8f7666 8f7666 a9b8c0',
  ],
  [1451, 843, 10, 'b4b3b3 56544c 5f7184 504e52 6a7a8e'],
  [1461, 833, 10, 'bebfbf c4cace bcbcbe cbd2da'],
  [1461, 853, 10, 'e6e4e1 e0e4e8 dfdfdf e6e9ec'],
];

function PositionsMosaic() {
  const strips = ['ffffff', 'f6f6f6', 'eaeaea', 'fcfcfc', 'ffffff', 'f6f6f6', 'eaeaea'];
  const lower = ['eaeaea', 'fbfbfb', 'ffffff', 'f6f6f6', 'eaeaea', 'fbfbfb', 'ffffff', 'ebebeb', 'c6c6c6', 'f7f7f7'];
  return (
    <svg width="1900" height="351" viewBox="12 513 1900 351" className="pointer-events-none absolute top-0 left-0">
      <g shapeRendering="crispEdges">
        {strips.map((c, i) => (
          <rect key={i} x="16" y={543 + i * 10} width="1896" height={i === 6 ? 8 : 10} fill={`#${c}`} />
        ))}
        {strips.map((c, i) => (
          <rect key={i} x="17" y={663 + i * 10} width="1895" height={i === 6 ? 8 : 10} fill={`#${c}`} />
        ))}
        {lower.map((c, i) => (
          <rect key={i} x="20" y={763 + i * 10} width="1869" height="10" fill={`#${c}`} />
        ))}
      </g>
      <Mosaic runs={[...upperBlock(543, 0), ...upperBlock(663, 4), ...FIRST, ...SECOND, ...THIRD]} />
    </svg>
  );
}

const COLUMNS = ['Символ', 'Тикет', 'Время', 'Тип', 'Объем', 'Цена', 'S / L', 'T / P', 'Цена', 'Своп', 'Прибыль', 'Комментарий'];

function PositionsTable() {
  return (
    <div className="relative flex-1 overflow-hidden border-t border-l border-[#a0a0a0] bg-white pr-[2px]">
      <table className="w-full table-fixed border-separate border-spacing-0 text-[11px] leading-[19px]">
        <colgroup>
          <col className="w-[176px]" />
          <col className="w-[121px]" />
          <col className="w-[141px]" />
          <col className="w-[135px]" />
          <col className="w-[135px]" />
          <col className="w-[135px]" />
          <col className="w-[135px]" />
          <col className="w-[135px]" />
          <col className="w-[135px]" />
          <col className="w-[135px]" />
          <col className="w-[149px]" />
          <col />
        </colgroup>
        <thead>
          <tr className="h-6">
            {COLUMNS.map((c, i) => (
              <th key={i} className={`border-r border-[#e2e2e2] px-[5px] pt-0 pb-[3px] font-normal ${i < 2 ? 'text-left' : 'text-right'}`}>
                {i === 0 ? (
                  <span className="flex items-center gap-5">
                    {c}
                    <svg width="7" height="4" viewBox="0 0 7 4"><path d="M0 4h7L3.500 0z" /></svg>
                  </span>
                ) : (
                  c
                )}
              </th>
            ))}
          </tr>
        </thead>
        <tbody>
          {Array.from({ length: 15 }, (_, i) => (
            <TradeRow key={i} index={i} />
          ))}
          <tr className="h-5 bg-[#c6c6c6]">
            <td colSpan={12} className="px-[3px] py-0">
              <svg width="14" height="14" viewBox="0 0 14 14" fill="none" stroke="#222">
                <circle cx="7" cy="7" r="6" />
                <path d="M4 7h6" />
              </svg>
            </td>
          </tr>
        </tbody>
      </table>
      <PositionsMosaic />
      <div className="absolute right-[80px] bottom-0 text-[#bfbfbf]">
        <p className="text-[19px] leading-[24px]">Активация Windows</p>
        <p className="text-[14px] leading-[20px] whitespace-nowrap">Чтобы активировать Windows, перейдите в раздел "Параметры".</p>
      </div>
    </div>
  );
}

const PANEL_TABS: { label: string; count?: number }[] = [
  { label: 'Активы' },
  { label: 'История' },
  { label: 'Новости', count: 99 },
  { label: 'Почта', count: 10 },
  { label: 'Календарь' },
  { label: 'Компания' },
  { label: 'Алерты' },
  { label: 'Статьи' },
  { label: 'Библиотека' },
  { label: 'Эксперты' },
  { label: 'Журнал' },
];

function PanelTabs() {
  return (
    <div className="flex h-[24px] items-start border-t border-black bg-[#f0f0f0] pl-[3px] text-[11px] leading-[18px] text-[#6b6b6b]">
      <button className="-mt-px h-[20px] border border-t-0 border-black bg-white px-[10px] text-black">Торговля</button>
      {PANEL_TABS.map((t, i) => (
        <button key={t.label} className="flex h-[19px] items-center">
          <span className="flex px-[10px]">
            {t.label}
            {t.count && <span className="mt-[7px] ml-[2px] text-[9px] leading-[11px] font-bold text-[#ff2020]">{t.count}</span>}
          </span>
          {i < PANEL_TABS.length - 1 && <span className="h-[14px] w-px bg-[#6b6b6b]" />}
        </button>
      ))}
      <div className="ml-auto flex h-[23px] items-center gap-[15px] pr-[11px] text-black">
        <button className="flex items-center gap-[5px]"><BagIcon size={13} />Маркет</button>
        <button className="flex items-center gap-1 text-[#a8a8a8]"><SignalIcon size={14} />Сигналы</button>
        <button className="flex items-center gap-1"><CloudIcon size={15} />VPS</button>
        <button className="flex items-center gap-1">
          <Icon size={15}>
            <rect x="4" y="4" width="12" height="12" fill="#b9e0fa" />
            <path d="M6 0v4M10 0v4M14 0v4M6 16v4M10 16v4M14 16v4M0 6h4M0 10h4M0 14h4M16 6h4M16 10h4M16 14h4" />
          </Icon>
          Тестер
        </button>
      </div>
    </div>
  );
}

function Toolbox() {
  return (
    <section className="flex min-h-[460px] flex-1 bg-[#f0f0f0]">
      <div className="flex w-[11px] flex-col items-start">
        <button aria-label="Закрыть панель" className="flex h-[14px] w-[9px] items-center">
          <svg width="6" height="6" viewBox="0 0 6 6" stroke="#000" strokeWidth="1.500">
            <path d="M.5.5l5 5M5.500.5l-5 5" />
          </svg>
        </button>
        <div className="flex w-[10px] flex-1 items-center bg-linear-to-b from-[#bcd3ee] to-[#96b4d3] pb-[2px] text-[10px] leading-[14px] [writing-mode:vertical-rl]">
          <span className="mt-auto rotate-180">Инструменты</span>
        </div>
      </div>
      <div className="flex min-w-0 flex-1 flex-col">
        <PositionsTable />
        <PanelTabs />
      </div>
    </section>
  );
}

const STATUS_RUNS: Run[] = [
  [17, 5, 10, 'a9a1a0 e3e3e6 a9abbc e0e1e6 eeebe6 bbb0ad c1bcb6 bdc8c9 e0e0e6 ebe9df e6dbcf dcdcd8 cbc0c5 a8a8a8 c3cedc'],
  [17, 15, 10, 'e3e3e3 e9e9ea e3e3e6 ececec efefef e6e4e3 b9d9e6 e9e9ea e9e9ea ebebe8 eeebe9 ececec e9e6e8 dfdfdf e3e6ed'],
  [1167, 5, 10, 'd0d0d8 9e8b8e c5cbd8 e0e9da'],
  [1177, 15, 10, 'dedada e4e4e8'],
  [1406, 5, 20, 'e0e0e0'],
  [1476, 5, 20, 'f6f6f6'],
  [1686, 5, 20, 'dedede'],
];

function StatusBar() {
  return (
    <div className="relative flex h-[26px] items-center border-t border-white bg-[#f0f0f0] pt-[2px] text-[11px]">
      <span>Для</span>
      <svg width="1740" height="25" viewBox="0 0 1740 25" className="absolute top-0 left-0">
        <path d="M17 5h1723v20H17z" fill="#f0f0f0" />
        <Mosaic runs={STATUS_RUNS} />
      </svg>
      <div className="ml-auto flex h-full w-[174px] items-center border-t border-[#a0a0a0] pl-[13px]">
        <div className="mr-[6px] h-[18px] w-px bg-[#a0a0a0]" />
        <svg width="14" height="11" viewBox="0 0 14 11" fill="#0ea03a" className="mr-[6px]">
          <path d="M0 8h2v3H0zM3 6h2v5H3zM6 4h2v7H6zM9 2h2v9H9zM12 0h2v11h-2z" />
        </svg>
        50.15 ms
      </div>
    </div>
  );
}

// top strip, middle strip and bottom strip of every pinned application
const APPS: [number, string, string, string][] = [
  [385, '2d3022 28273a 33272b', '282f22 24233d 33253a', '45201a 2a1d3b 3a203f'],
  [436, '30262d 2d3a3a 303020', '3a1f6a 2f4a5a 314028', '2f205a 66304e 64391c'],
  [476, '2f2a40 2f5028 3a2a38', '3b3b6f 41753a 4a3050', '401f70 66254e 4a2a45'],
  [516, '302a30 28401f 332a2a', '30264d 28401f 40304a', '30264d 4a2035 3a2a50'],
  [556, '33241f 302830 2e2a2e', '2f2a22 30264d 33253a', '4a1f18 382248 40284a'],
  [597, '3c332e 5c554c 4a4640', '4a423a ddd8d0 fdf8f2', '4a423a ddd8d0 fdf8f2'],
  [647, '42401f 3a4a30', '84853a 55704a', '8a8a3a 4a5a66'],
  [677, '5a524e 5c5854 5c5854 5a5250', '5a524e 3b484a 3b484a 5a5250', '5a524e 50384f 55405c 5a5250'],
  [727, '3c4a55 3d5066 2e2a28', '8494a0 7a9fc4 3f3a38', '84964f aebfbe 3f3a38'],
  [767, '40503c 6a8a50 90a080', '6a6e55 9fd977 eef4e0', '6a6e55 94cf66 f3f6e8'],
  [806, '3f4a30 5f8048 808f70', '6a705a 9fd977 f3f8ea', '6a705a 94cf66 f3f8ea'],
  [847, '3a2a20 58391f 382a20', '5f3a22 be8660 84682a', '903040 e03a77 94603a'],
  [887, '3f3620 4f441c 40381f', '77602a c09a40 aa8c46', '6a5a28 cca33a c59c33'],
  [926, '303a3a 2f5a50 2f5a44', '30556a 2f8aa5 44cf88', '1f4f70 175a94 2a9080'],
  [966, '4a2420 662a26 55241f', 'a0403a ff6e66 ff7a70', 'a0403a ff6e66 ff7a70'],
  [1016, '2a4a5a 2f5a70', '4a9fc4 66bfdf', '50606a 55709c'],
  [1056, '202f28 22402f', '205040 2a6a50', '205a40 2a6a50'],
  [1096, '2d2c20 302f28', '33444a 554a3a', '33444a 5a4a33'],
  [1136, '602a26 8a2a20 60231f', 'a05a55 e8403a cf3a30', 'c0b0aa e8403a f04a40'],
  [1176, '4a3820 70281f 42301c', '45604a a04f70 94551f', '707a33 1f7f66 3f8a50'],
  [1216, '403a38 554f4c 403c38', 'a09a94 ffb8b0 dfdfdf', 'bfbab4 ff5533 c5c5c5'],
  [1256, '3f3a1f 5a541f 403a1f', '77702a a09a30 948f30', '77702a c5ac1a f0d000'],
  [1296, '55524c 6a6866 5a5855', 'd5d5d0 eeeeee dfe3df', 'dfdfda ccaab0 d5d5d5'],
  [1336, '2a2828 2c2c30', '33334a 3a3a55', '33334a 3a3a55'],
  [1386, '5a471f 4a3a18', 'cc9a33 8c6a14', 'cc9a33 94700a'],
  [1426, '55401f 50391a', 'be8020 a06a14', 'be8020 b87a0a'],
  [1466, '3a382a 44463a 3a382c', '6a6440 84968c 5a5645', '77703a 8a8a5a 55523a'],
  [1506, '3c3a2a 4a4c40 3a382c', '6a6440 94a09a 5a5645', '77703a 8f8f66 55523a'],
  [1546, '3a2618 44301c 3a281a', '603a1f 6a451f 4a301c', '33271c 3f2a1c 33261c'],
  [1586, '2f5a77 2a6a8a 304a5a', '3090c0 44aadf 336a80', '9a5566 d56070 c04550'],
  [1626, '3f3c2c 77705a 403c2c', '77704a c8c8aa 5a553a', '77704a 94802a 5a553a'],
  [1676, '44403a 5a5650 44403a', '5a5850 706c66 44403a', '5a5850 706c66 44403a'],
  [1716, '66645c', '6a6860', '6a6860'],
];

function Taskbar() {
  return (
    <div className="relative flex h-[34px] bg-linear-to-r from-[#32241d] via-[#2d3020] to-[#2c281f] text-[11px] text-white">
      <svg width="1740" height="34" viewBox="0 0 1740 34" className="shrink-0">
        <path d="M0 0h46v34H0z" fill="#1c2326" />
        <path d="M12 13h11v12H12z" fill="#e8ecee" />
        <path d="M46 0h289v34H46z" fill="#f1f1f1" />
        <Mosaic
          runs={[
            [17, 0, 10, '66696b 363d40 40484b'],
            [17, 10, 10, '6b6f71 2e3538 363d40'],
            [17, 20, 10, '5f6466 2e3538 363d40'],
            [56, 10, 10, 'dedede dedede'],
            [86, 10, 20, 'ece6e0 e6e6e4 d5e0e8 e9eeee'],
            [256, 10, 10, 'd5e3de d5bfaa ccb8ac c9bcb6 dccbcf d8d5e3 d5d3dc'],
            [256, 20, 8, '8fb5a8 a07038 cc9f88 b08f7c e3bf99 c58a66 b9b4b3'],
            [266, 28, 6, '6f7890 b8732e 7d7788 d5a37a b88a66 8890b0'],
            [326, 0, 34, 'aaa6a3'],
          ]}
        />
        {APPS.map(([x, top, middle, bottom]) => (
          <Mosaic key={x} runs={[[x, 0, 10, top], [x, 10, 10, middle], [x, 20, 9, bottom]]} />
        ))}
        <path d="M602 29h22v3h-22zM770 29h22v3h-22zM808 29h24v3h-24zM1303 29h23v3h-23z" fill="#fff" />
        <path d="M974 29h23v4h-23zM1138 29h26v4h-26z" fill="#ff4436" />
        <path d="M1266 29h20l-9 4z" fill="#f0c010" />
        <path d="M856 29h12l-6 4z" fill="#e03a77" />
        <path d="M938 29h14l-7 4z" fill="#1278d0" />
        <path d="M1597 29h17l-4 5h-9z" fill="#f03030" />
      </svg>
      <div className="ml-auto flex items-center pr-[2px]">
        <svg width="16" height="12" viewBox="0 0 16 12" fill="none" stroke="#fff" className="mr-3">
          <path d="M1 4h2l3-3v10l-3-3H1zM10 4l4 4M14 4l-4 4" />
        </svg>
        <span className="mr-3">РУС</span>
        <div className="mr-4 pt-[2px] text-center leading-[17px]">
          <div>7:38</div>
          <div>08.05.2025</div>
        </div>
        <button aria-label="Уведомления" className="mr-[11px] flex pt-1">
          <svg width="26" height="26" viewBox="0 0 26 26">
            <path d="M1 2h15v13h-4l-3 4v-4H1z" fill="#fff" />
            <path d="M4 5.500h9M4 8.500h9M4 11.500h7" stroke="#2c281f" />
            <circle cx="16" cy="18" r="7" fill="#4c4a48" stroke="#8a8886" />
            <text x="13" y="22" fontSize="10" fill="#fff">3</text>
          </svg>
        </button>
        <div className="h-[34px] w-px bg-[#807c76]" />
      </div>
    </div>
  );
}

export default function App() {
  return (
    <div className="flex min-h-screen flex-col overflow-hidden bg-white pt-[5px] pr-[25px] font-['Open_Sans',sans-serif] text-black">
      <MenuBar />
      <Toolbar />
      <main className="overflow-hidden border-b-2 border-[#f4f4f4] bg-black">
        <PriceChart />
      </main>
      <ChartTabs />
      <div className="h-[2px] bg-white" />
      <Toolbox />
      <StatusBar />
      <Taskbar />
    </div>
  );
}
